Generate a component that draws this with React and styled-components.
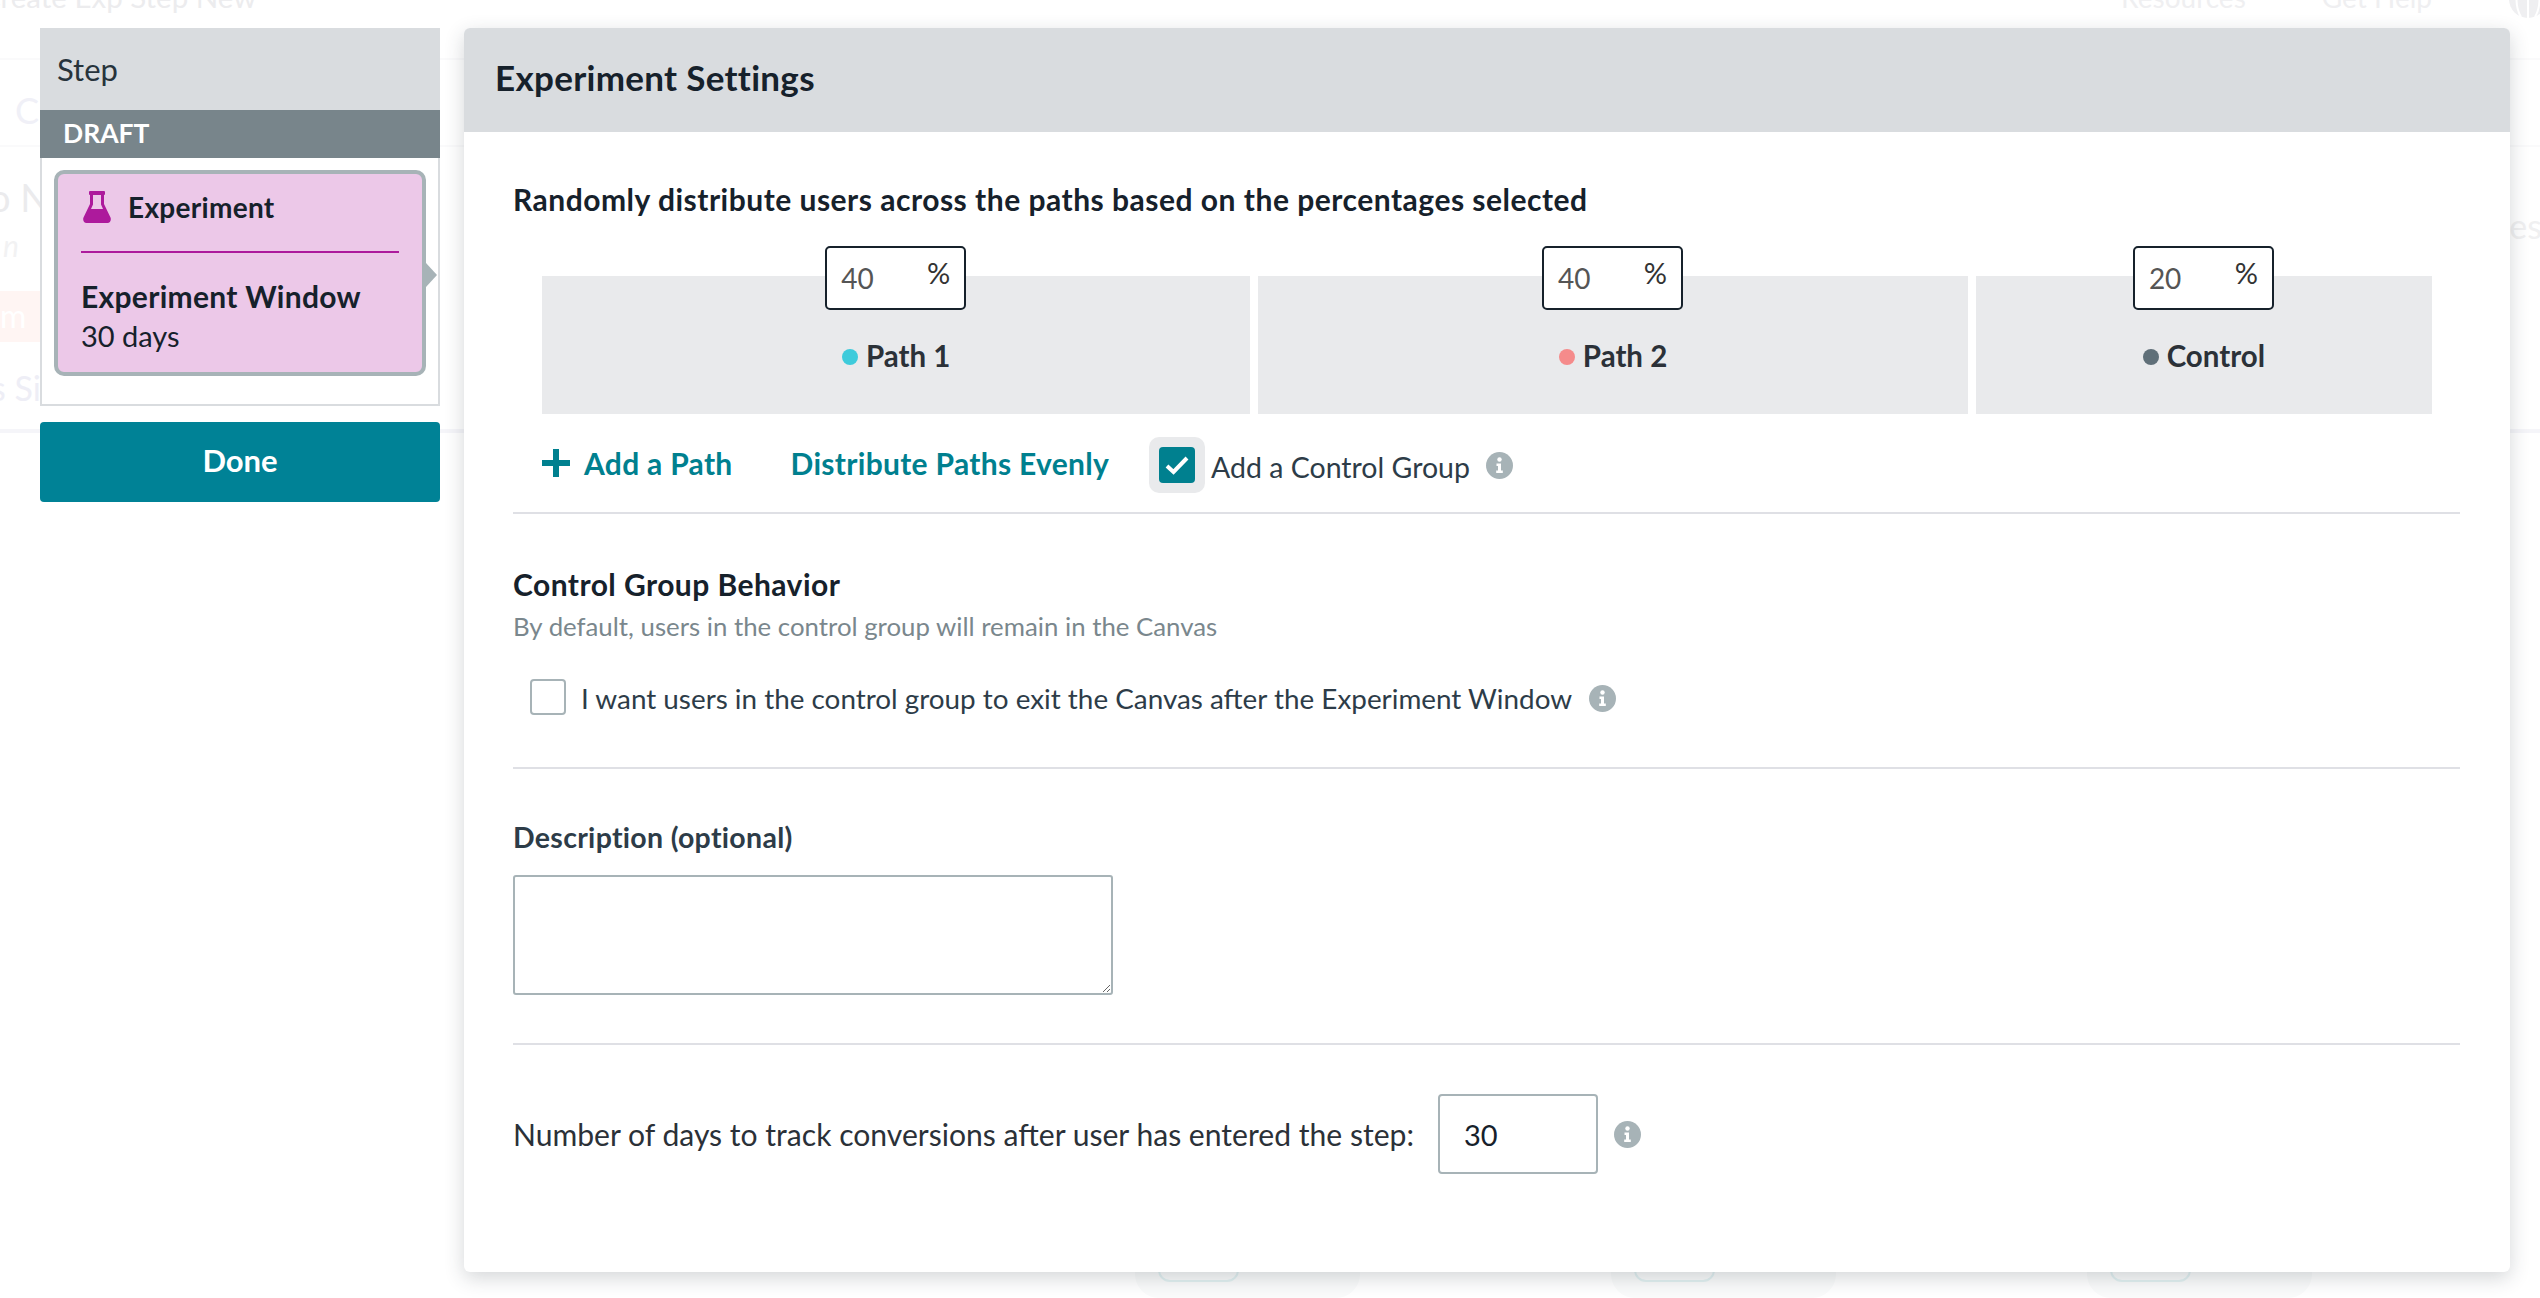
import styled, { createGlobalStyle } from "styled-components";

const GlobalStyle = createGlobalStyle`
    html, body {
        margin: 0;
        padding: 0;
        background: #fff;
    }
    body {
        font-family: "Lato", "Liberation Sans", sans-serif;
        color: #212b36;
    }
`;

// faded page behind the modal
const BackPage = styled.div`
    position: absolute;
    inset: 0;
    overflow: hidden;
    display: flex;
    flex-direction: column;
`;
const BackTop = styled.div`
    flex: none;
    height: 58px;
    border-bottom: 2px solid #fafafb;
    display: flex;
    justify-content: space-between;
`;
const BackTitle = styled.div`
    margin: -21px 0 0 -19px;
    font-size: 29.500px;
    line-height: 36px;
    color: #ececee;
`;
const BackNav = styled.div`
    display: flex;
    gap: 20px;
    margin: -21px -8px 0 0;
    font-size: 28px;
    line-height: 36px;
    color: #efeff1;
`;
const NavCaret = styled.span`
    width: 0;
    height: 0;
    margin: 14px 22px 0 0;
    border-left: 7px solid transparent;
    border-right: 7px solid transparent;
    border-top: 7px solid #efeff1;
`;
const BackTabs = styled.div`
    flex: none;
    height: 87px;
    box-sizing: border-box;
    border-bottom: 2px solid #fafafb;
    padding: 28px 0 0 15px;
    display: flex;
    gap: 318px;
    font-size: 36px;
    color: #f0f0f7;
`;
const BackTab = styled.span`
    height: 57px;
    padding-right: 60px;
    border-bottom: ${(p) => (p.$active ? "4px solid #f0f0f7" : "none")};
`;
const BackHero = styled.div`
    flex: none;
    height: 286px;
    box-sizing: border-box;
    border-bottom: 4px solid #f5f5f9;
    display: flex;
    justify-content: space-between;
`;
const BackInfo = styled.div`
    display: flex;
    flex-direction: column;
    align-items: flex-start;
`;
const BackName = styled.div`
    margin: 27px 0 0 -11px;
    font-size: 38px;
    line-height: 46px;
    color: #ebebed;
`;
const BackNote = styled.div`
    margin: 6px 0 0 3px;
    font-size: 30px;
    line-height: 38px;
    font-style: italic;
    color: #f2f2f3;
`;
const BackPill = styled.div`
    margin-top: 27px;
    width: 40px;
    height: 51px;
    background: #fff5f3;
    color: #fff;
    font-size: 32px;
    line-height: 50px;
    overflow: hidden;
`;
const BackStatus = styled.div`
    margin: 25px 0 0 -9px;
    font-size: 34px;
    line-height: 42px;
    white-space: nowrap;
    color: #eeeef6;
`;
const BackTail = styled.div`
    margin: 58px -2px 0 0;
    font-size: 34px;
    color: #f0f0f1;
`;
const BackFoot = styled.div`
    margin-top: auto;
    padding-left: 1135px;
    display: flex;
    gap: 251px;
    height: 60px;
`;
const BackCard = styled.div`
    width: 225px;
    background: #fafbfb;
    border-radius: 0 0 24px 24px;
    padding-left: 23px;
    box-sizing: border-box;
`;
const BackChip = styled.div`
    width: 81px;
    height: 44px;
    box-sizing: border-box;
    border: 2px solid #e2f1f2;
    border-radius: 12px;
`;

const Modal = styled.div`
    position: relative;
    width: 2540px;
    height: 1298px;
    box-sizing: border-box;
    padding: 28px 30px 26px 40px;
    display: flex;
    gap: 24px;
    align-items: flex-start;
`;

const Sidebar = styled.aside`
    width: 400px;
    flex: none;
`;
const StepBox = styled.div`
    background: #fff;
    border: 2px solid #d9dcdf;
    border-top: none;
    height: 248px;
    box-sizing: border-box;
    padding: 12px 12px 0;
`;
const StepHead = styled.div`
    height: 82px;
    background: #d9dcdf;
    font-size: 31px;
    line-height: 82px;
    padding-left: 17px;
    color: #27333b;
`;
const DraftBar = styled.div`
    height: 48px;
    background: #78858b;
    color: #fff;
    font-size: 26.500px;
    font-weight: 700;
    line-height: 46px;
    padding-left: 23px;
`;
const StepCard = styled.div`
    position: relative;
    height: 206px;
    box-sizing: border-box;
    background: #ecc8e8;
    border: 4px solid #a7b3b7;
    border-radius: 10px;
    padding: 0 23px;
    &::after {
        content: "";
        position: absolute;
        right: -15px;
        top: 89px;
        border-left: 11px solid #a7b3b7;
        border-top: 12px solid transparent;
        border-bottom: 12px solid transparent;
    }
`;
const CardTitle = styled.div`
    display: flex;
    align-items: center;
    gap: 17px;
    height: 79px;
    box-sizing: border-box;
    padding: 0 0 11px 2px;
    border-bottom: 2px solid #ad1a9c;
    font-size: 28px;
    letter-spacing: 0.3px;
    font-weight: 700;
    color: #16212b;
`;
const CardHeading = styled.div`
    margin-top: 24px;
    font-size: 30px;
    letter-spacing: 0.3px;
    font-weight: 700;
    color: #16212b;
    line-height: 39px;
`;
const CardText = styled.div`
    font-size: 29px;
    color: #16212b;
    line-height: 39px;
`;
const DoneButton = styled.button`
    display: block;
    width: 400px;
    height: 80px;
    margin-top: 16px;
    border: none;
    border-radius: 4px;
    background: #008296;
    color: #fff;
    font-family: inherit;
    font-size: 31px;
    font-weight: 700;
    line-height: 76px;
    padding: 0 0 4px;
`;

const Panel = styled.main`
    flex: 1;
    height: 1244px;
    background: #fff;
    border-radius: 6px;
    box-shadow: 0 6px 20px rgba(40, 50, 60, 0.2);
    overflow: hidden;
`;
const PanelHead = styled.header`
    height: 104px;
    background: #d9dcdf;
    padding-left: 31px;
    font-size: 35px;
    letter-spacing: 0.3px;
    font-weight: 700;
    line-height: 98px;
    color: #16212b;
`;
const PanelBody = styled.div`
    padding: 47px 50px 0 49px;
`;
const LeadText = styled.div`
    font-size: 30px;
    letter-spacing: 0.5px;
    font-weight: 700;
    line-height: 40px;
    color: #16212b;
`;
const Distribution = styled.div`
    display: flex;
    gap: 8px;
    margin: 57px 28px 0 29px;
`;
const PathBar = styled.div`
    position: relative;
    flex: ${(p) => p.$share} 0 0;
    height: 138px;
    background: #e9eaec;
    display: flex;
    align-items: flex-end;
    justify-content: center;
    padding-bottom: 38px;
    box-sizing: border-box;
`;
const PctBox = styled.div`
    position: absolute;
    top: -30px;
    left: 50%;
    width: 141px;
    height: 64px;
    margin-left: -71px;
    box-sizing: border-box;
    background: #fff;
    border: 2px solid #16212b;
    border-radius: 5px;
    display: flex;
    justify-content: space-between;
    padding: 0 14px;
    color: #555;
`;
const PctValue = styled.span`
    font-size: 28px;
    line-height: 60px;
`;
const PctSign = styled.span`
    font-size: 29px;
    line-height: 50px;
    color: #333;
`;
const PathName = styled.div`
    display: flex;
    align-items: center;
    gap: 8px;
    font-size: 29.500px;
    font-weight: 700;
    line-height: 40px;
    color: #2b3138;
`;
const Dot = styled.span`
    width: 16px;
    height: 16px;
    border-radius: 50%;
    background: ${(p) => p.$color};
    margin-top: 2px;
`;
const ActionRow = styled.div`
    display: flex;
    align-items: center;
    height: 100px;
    padding-left: 29px;
    border-bottom: 2px solid #dfe0e5;
    box-sizing: border-box;
`;
const LinkButton = styled.a`
    display: flex;
    align-items: center;
    gap: 14px;
    font-size: 30px;
    letter-spacing: 0.3px;
    font-weight: 700;
    color: #00808f;
    margin-right: ${(p) => p.$gap}px;
`;
const CheckHalo = styled.span`
    display: flex;
    align-items: center;
    justify-content: center;
    width: 56px;
    height: 56px;
    border-radius: 10px;
    background: #e9eaec;
    margin: 4px 6px 0 0;
`;
const CheckBox = styled.span`
    display: flex;
    align-items: center;
    justify-content: center;
    width: 36px;
    height: 36px;
    box-sizing: border-box;
    border-radius: 4px;
    background: ${(p) => (p.$checked ? "#00808f" : "#fff")};
    border: ${(p) => (p.$checked ? "none" : "2px solid #a7b3b7")};
`;
const OptionLabel = styled.span`
    font-size: ${(p) => p.$size}px;
    color: #2d3c48;
    line-height: 40px;
    margin-top: ${(p) => p.$drop}px;
`;
const InfoIcon = styled.svg`
    width: 27px;
    height: 27px;
    flex: none;
    margin: ${(p) => p.$drop}px 0 0 ${(p) => p.$gap}px;
`;
const SubHeading = styled.div`
    margin-top: 50px;
    font-size: 30px;
    letter-spacing: 0.45px;
    font-weight: 700;
    line-height: 40px;
    color: #16212b;
`;
const HelpText = styled.div`
    margin-top: 3px;
    font-size: 25.800px;
    line-height: 38px;
    color: #7a878d;
`;
const OptionRow = styled.div`
    display: flex;
    align-items: center;
    gap: 15px;
    margin-top: 30px;
    padding: 0 0 48px 17px;
    border-bottom: 2px solid #dfe0e5;
`;
const FieldLabel = styled.div`
    margin-top: 48px;
    font-size: 28.500px;
    letter-spacing: 0.3px;
    font-weight: 700;
    line-height: 40px;
    color: #2d3c48;
`;
const TextBox = styled.textarea`
    display: block;
    width: 600px;
    height: 120px;
    margin: 18px 0 48px;
    box-sizing: border-box;
    border: 2px solid #a7b3b7;
    border-radius: 3px;
    outline: none;
`;
const Divider = styled.div`
    height: 2px;
    background: #dfe0e5;
`;
const DaysRow = styled.div`
    display: flex;
    align-items: center;
    margin-top: 49px;
`;
const DaysLabel = styled.span`
    font-size: 30.100px;
    color: #2b3138;
    margin-right: 24px;
`;
const DaysInput = styled.input`
    width: 160px;
    height: 80px;
    box-sizing: border-box;
    border: 2px solid #a7b3b7;
    border-radius: 4px;
    padding: 0 24px;
    font-family: inherit;
    font-size: 29px;
    color: #16212b;
    outline: none;
`;

function Info({ gap, drop = 0 }) {
    return (
        <InfoIcon $gap={gap} $drop={drop} viewBox="0 0 27 27">
            <circle cx="13.500" cy="13.500" r="13.500" fill="#a7b3b7" />
            <circle cx="13.500" cy="7.500" r="2.200" fill="#fff" />
            <path d="M10.500 11.500h4.500v7h1.800v2.400H10.200v-2.400h1.800v-4.600h-1.500z" fill="#fff" />
        </InfoIcon>
    );
}

function Flask() {
    return (
        <svg width="28" height="32" viewBox="0 0 28 32">
            <rect x="6" y="0" width="16" height="4" rx="1" fill="#ad1a9c" />
            <path
                d="M7 4h14v9l6.500 13.500c1 2.500-.5 5.500-3 5.500H3.500c-2.500 0-4-3-3-5.500L7 13z"
                fill="#ad1a9c"
            />
            <path d="M10 4h8v9.500l2 4.500H8l2-4.500z" fill="#ecc8e8" />
        </svg>
    );
}

function Globe() {
    return (
        <svg width="40" height="40" viewBox="0 0 40 40">
            <circle cx="20" cy="20" r="19" fill="#efeff1" />
            <path d="M1 20h38M20 1v38M13 2c-6 10-6 26 0 36M27 2c6 10 6 26 0 36" fill="none" stroke="#fff" strokeWidth="2" />
        </svg>
    );
}

const PATHS = [
    { name: "Path 1", pct: 40, color: "#3ecbdb", share: 708 },
    { name: "Path 2", pct: 40, color: "#f58b8b", share: 709 },
    { name: "Control", pct: 20, color: "#5f6f78", share: 456 },
];

function App() {
    return (
        <>
            <GlobalStyle />
            <BackPage>
                <BackTop>
                    <BackTitle>Create Exp Step New</BackTitle>
                    <BackNav>
                        <span>Resources</span>
                        <NavCaret />
                        <span>Get Help</span>
                        <NavCaret />
                        <Globe />
                    </BackNav>
                </BackTop>
                <BackTabs>
                    <BackTab>Create</BackTab>
                    <BackTab $active>Experiment</BackTab>
                </BackTabs>
                <BackHero>
                    <BackInfo>
                        <BackName>o Name</BackName>
                        <BackNote>n</BackNote>
                        <BackPill>m</BackPill>
                        <BackStatus>s Since</BackStatus>
                    </BackInfo>
                    <BackTail>Messages</BackTail>
                </BackHero>
                <BackFoot>
                    <BackCard><BackChip /></BackCard>
                    <BackCard><BackChip /></BackCard>
                    <BackCard><BackChip /></BackCard>
                </BackFoot>
            </BackPage>
            <Modal>
                <Sidebar>
                    <StepHead>Step</StepHead>
                    <DraftBar>DRAFT</DraftBar>
                    <StepBox>
                        <StepCard>
                            <CardTitle>
                                <Flask />
                                Experiment
                            </CardTitle>
                            <CardHeading>Experiment Window</CardHeading>
                            <CardText>30 days</CardText>
                        </StepCard>
                    </StepBox>
                    <DoneButton>Done</DoneButton>
                </Sidebar>
                <Panel>
                    <PanelHead>Experiment Settings</PanelHead>
                    <PanelBody>
                        <LeadText>
                            Randomly distribute users across the paths based on the percentages selected
                        </LeadText>
                        <Distribution>
                            {PATHS.map((path) => (
                                <PathBar key={path.name} $share={path.share}>
                                    <PctBox>
                                        <PctValue>{path.pct}</PctValue>
                                        <PctSign>%</PctSign>
                                    </PctBox>
                                    <PathName>
                                        <Dot $color={path.color} />
                                        {path.name}
                                    </PathName>
                                </PathBar>
                            ))}
                        </Distribution>
                        <ActionRow>
                            <LinkButton $gap={58}>
                                <svg width="28" height="28" viewBox="0 0 28 28">
                                    <path d="M11 0h6v11h11v6H17v11h-6V17H0v-6h11z" fill="#00808f" />
                                </svg>
                                Add a Path
                            </LinkButton>
                            <LinkButton $gap={40}>Distribute Paths Evenly</LinkButton>
                            <CheckHalo>
                                <CheckBox $checked>
                                    <svg width="24" height="20" viewBox="0 0 24 20">
                                        <path d="M2 11l6.500 6L22 3" fill="none" stroke="#fff" strokeWidth="4" />
                                    </svg>
                                </CheckBox>
                            </CheckHalo>
                            <OptionLabel $size={28.5} $drop={8}>Add a Control Group</OptionLabel>
                            <Info gap={16} drop={4} />
                        </ActionRow>
                        <SubHeading>Control Group Behavior</SubHeading>
                        <HelpText>By default, users in the control group will remain in the Canvas</HelpText>
                        <OptionRow>
                            <CheckBox />
                            <OptionLabel $size={27.85} $drop={4}>I want users in the control group to exit the Canvas after the Experiment Window</OptionLabel>
                            <Info gap={2} drop={2} />
                        </OptionRow>
                        <FieldLabel>Description (optional)</FieldLabel>
                        <TextBox />
                        <Divider />
                        <DaysRow>
                            <DaysLabel>Number of days to track conversions after user has entered the step:</DaysLabel>
                            <DaysInput defaultValue="30" />
                            <Info gap={16} />
                        </DaysRow>
                    </PanelBody>
                </Panel>
            </Modal>
        </>
    );
}

export default App;
